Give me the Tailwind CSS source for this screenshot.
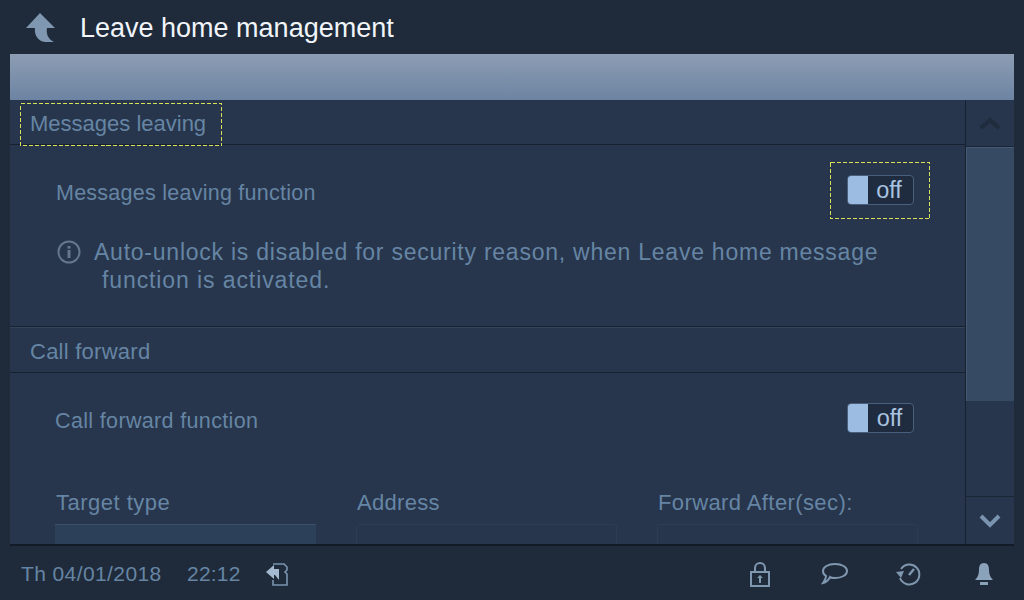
<!DOCTYPE html>
<html lang="en">
<head>
  <meta charset="UTF-8">
  <title>Leave home management</title>
  <script src="https://cdn.jsdelivr.net/npm/@tailwindcss/browser@4"></script>
</head>
<body class="w-[1024px] h-[600px] overflow-hidden bg-[#1f2b3a] font-['Liberation_Sans',sans-serif] text-[#6685a4]">
  <!-- header -->
  <div class="h-[54px] flex items-center pl-[25px]">
    <svg width="32" height="32" viewBox="0 0 32 32" class="mt-[3px]">
      <path d="M15 0 L30 15 L22 15 C21 21 23 26 29 29 L20 29 C13 28 9 22 10 15 L1 15 Z" fill="#7f97b0"/>
    </svg>
    <div class="ml-[23px] mt-[2px] text-[27px] text-[#f1f5f9]">Leave home management</div>
  </div>

  <!-- main panel -->
  <div class="mx-[10px] w-[1004px] h-[492px] flex flex-col border-b-2 border-[#121b26] overflow-hidden">
    <div class="h-[46px] shrink-0 bg-gradient-to-b from-[#8d9db4] to-[#6c84a2]"></div>
    <div class="flex flex-1 min-h-0 bg-[#27364c]">
      <div class="w-[955px] shrink-0 overflow-hidden">
        <!-- section 1 -->
        <div class="h-[45px] border-b border-[#17212f] pl-[10px] pt-[3px]">
          <div class="relative w-[202px] h-[43px] pl-[10px] pb-[2px] flex items-center text-[22px]">
            Messages leaving
            <svg width="202" height="43" class="absolute left-0 top-0"><rect x="0.5" y="0.5" width="201" height="42" fill="none" stroke="#d9e05a" stroke-dasharray="4 2" shape-rendering="crispEdges"/></svg>
          </div>
        </div>
        <div class="h-[182px] border-b border-[#17212f] shadow-[0_1px_0_#34445a] pl-[46px] pr-[45px]">
          <div class="flex items-center justify-between pt-[17px] h-[74px]">
            <div class="text-[21.5px] tracking-[0.25px] mt-[6px]">Messages leaving function</div>
            <div class="relative w-[100px] h-[57px] mr-[-10px] mt-[-1px] flex items-center justify-center">
              <svg width="100" height="57" class="absolute left-0 top-0"><rect x="0.5" y="0.5" width="99" height="56" fill="none" stroke="#d9e05a" stroke-dasharray="4 2" shape-rendering="crispEdges"/></svg>
              <div class="w-[67px] h-[30px] rounded-[4px] border border-[#4a5f7b] bg-[#1f2c3f] flex overflow-hidden">
                <div class="w-[20px] bg-[#9dbce2]"></div>
                <div class="flex-1 pr-[2px] text-center text-[23.5px] leading-[28px] text-[#a9c3e0]">off</div>
              </div>
            </div>
          </div>
          <div class="flex items-start mt-[21px]">
            <svg width="26" height="26" viewBox="0 0 26 26" class="mt-[-1px] shrink-0">
              <circle cx="13" cy="13" r="10.5" fill="none" stroke="#65778c" stroke-width="2"/>
              <rect x="11.5" y="11" width="3" height="8" fill="#65778c"/>
              <rect x="11.5" y="7" width="3" height="2.6" fill="#65778c"/>
            </svg>
            <div class="ml-[12px] text-[23px] leading-[28px] tracking-[0.76px] mt-[-2px]">
              Auto-unlock is disabled for security reason, when Leave home message<br>
              <span class="pl-[8px] tracking-[0.9px]">function is activated.</span>
            </div>
          </div>
        </div>
        <!-- section 2 -->
        <div class="h-[46px] border-b border-[#17212f] pl-[20px] pt-[3px] flex items-center text-[22px] tracking-[0.25px]">Call forward</div>
        <div class="pl-[46px] pr-[44px]">
          <div class="flex items-center justify-between h-[93px]">
            <div class="text-[21.5px] tracking-[0.35px] mt-[4px] ml-[-1px]">Call forward function</div>
            <div class="w-[67px] h-[30px] mr-[7px] mt-[-4px] rounded-[4px] border border-[#4a5f7b] bg-[#1f2c3f] flex overflow-hidden">
              <div class="w-[20px] bg-[#9dbce2]"></div>
              <div class="flex-1 pr-[2px] text-center text-[23.5px] leading-[28px] text-[#a9c3e0]">off</div>
            </div>
          </div>
          <div class="grid grid-cols-[301px_301px_262px] mt-[21px] text-[22px] tracking-[0.4px]">
            <div>
              <div class="h-[32px] leading-[32px] tracking-[0.5px]">Target type</div>
              <div class="w-[261px] ml-[-1px] h-[30px] mt-[5px] border-t border-[#3a4f6a] bg-[#2c405a]"></div>
            </div>
            <div>
              <div class="h-[32px] leading-[32px] tracking-[0.3px]">Address</div>
              <div class="w-[261px] ml-[-1px] h-[30px] mt-[5px] rounded-t-[3px] border border-[#2c3c54]"></div>
            </div>
            <div>
              <div class="h-[32px] leading-[32px]">Forward After(sec):</div>
              <div class="w-[261px] ml-[-1px] h-[30px] mt-[5px] rounded-t-[3px] border border-[#2c3c54]"></div>
            </div>
          </div>
        </div>
      </div>
      <!-- scrollbar -->
      <div class="flex-1 flex flex-col border-l border-[#17212f]">
        <div class="h-[47px] shrink-0 flex items-center justify-center border-b border-[#1b2635]">
          <svg width="22" height="14" viewBox="0 0 22 14"><path d="M2 12 L11 4 L20 12" fill="none" stroke="#1f2c3e" stroke-width="4"/></svg>
        </div>
        <div class="h-[254px] shrink-0 bg-[#364a63] border-t border-l border-[#465a74]"></div>
        <div class="flex-1 border-b border-[#1b2635]"></div>
        <div class="h-[47px] shrink-0 flex items-center justify-center">
          <svg width="22" height="14" viewBox="0 0 22 14"><path d="M2 2 L11 11 L20 2" fill="none" stroke="#7a94b0" stroke-width="4"/></svg>
        </div>
      </div>
    </div>
  </div>

  <!-- footer -->
  <div class="h-[54px] flex items-center pl-[21px] pt-[1px] text-[21px]">
    <div class="w-[166px] tracking-[0.4px]">Th 04/01/2018</div>
    <div class="w-[78px] tracking-[0.2px]">22:12</div>
    <svg width="24" height="26" viewBox="0 0 24 26" fill="none">
      <path d="M8 3 H19 L22 6 V9 L20 11 L22 13 V24 H8 V19" stroke="#7a94b0" stroke-width="1.6"/>
      <path d="M1 11 L9 4 V8 H14 V19 L10 14 H9 V18 Z" fill="#a5bad0"/>
    </svg>
    <svg width="20" height="26" viewBox="0 0 20 26" fill="none" class="ml-[461px]">
      <path d="M5 11 V7 A5 5 0 0 1 15 7 V11" stroke="#8097b0" stroke-width="2"/>
      <rect x="1" y="11" width="18" height="14" fill="none" stroke="#8097b0" stroke-width="2"/>
      <path d="M10 14 L13 17 H11 V22 H9 V17 H7 Z" fill="#8097b0"/>
    </svg>
    <svg width="28" height="24" viewBox="0 0 28 24" fill="none" class="ml-[51px]">
      <path d="M14 2 C21 2 26 5 26 9 C26 13 21 16 14 16 C12 16 10 16 9 15 C8 17 6 20 2 21 C4 18 5 16 5 14 C3 13 2 11 2 9 C2 5 7 2 14 2 Z" stroke="#8097b0" stroke-width="2"/>
    </svg>
    <svg width="26" height="26" viewBox="0 0 26 26" fill="none" class="ml-[47px]">
      <path d="M5 8 A10 10 0 1 1 4 17" stroke="#8097b0" stroke-width="2"/>
      <path d="M0 11 L8 10 L5 17 Z" fill="#8097b0"/>
      <path d="M13 14 L18 8" stroke="#8097b0" stroke-width="2.4"/>
    </svg>
    <svg width="22" height="26" viewBox="0 0 22 26" class="ml-[51px]">
      <path d="M11 2 C15 2 16 5 16 9 C16 14 18 17 20 19 H2 C4 17 6 14 6 9 C6 5 7 2 11 2 Z" fill="#8ba2bb"/>
      <rect x="7" y="21" width="8" height="3" fill="#8ba2bb"/>
    </svg>
  </div>
</body>
</html>
